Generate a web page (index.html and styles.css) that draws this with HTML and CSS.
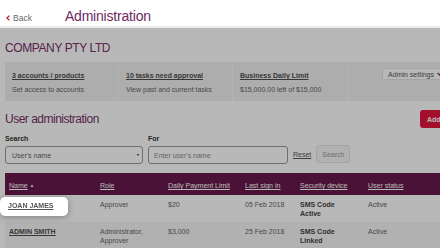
FILE: index.html
```html
<!DOCTYPE html>
<html lang="en">
<head>
    <meta charset="UTF-8">
    <meta name="viewport" content="width=device-width, initial-scale=1.0">
    <title>Administration</title>

    <link rel="stylesheet" href="styles.css">
</head>
<body>

    <header class="topbar">
        <a class="back" href="#"><svg class="back-icon" width="4" height="6" viewBox="0 0 4 6"><polyline points="3.4,0.6 0.9,3 3.4,5.4" fill="none" stroke="#d0103a" stroke-width="1.3"/></svg>Back</a>
        <h1 class="page-title">Administration</h1>
    </header>

    <!-- Dimmed layer behind the highlighted name -->
    <div class="dim"></div>

    <main class="content">
        <h2 class="company">COMPANY PTY LTD</h2>

        <div class="summary">
            <div class="summary-cell">
                <a class="summary-title" href="#">3 accounts / products</a>
                <p class="summary-note">Set access to accounts</p>
            </div>
            <div class="summary-cell">
                <a class="summary-title" href="#">10 tasks need approval</a>
                <p class="summary-note">View past and current tasks</p>
            </div>
            <div class="summary-cell">
                <a class="summary-title" href="#">Business Daily Limit</a>
                <p class="summary-note">$15,000.00 left of $15,000</p>
            </div>
            <div class="summary-cell settings">
                <button class="settings-btn">Admin settings <svg width="5" height="4" viewBox="0 0 5 4"><polyline points="0.6,0.8 2.5,3 4.4,0.8" fill="none" stroke="#6e2a62" stroke-width="1.2"/></svg></button>
            </div>
        </div>

        <div class="section-head">
            <h3 class="section-title">User administration</h3>
            <button class="add-btn">Add</button>
        </div>

        <form class="search">
            <div class="field">
                <label>Search</label>
                <div class="select-wrap">
                    <select class="select">
                        <option>User's name</option>
                    </select>
                </div>
            </div>
            <div class="field">
                <label>For</label>
                <input class="text-input" type="text" placeholder="Enter user's name">
            </div>
            <a class="reset" href="#">Reset</a>
            <button class="search-btn" type="button">Search</button>
        </form>

        <table class="users">
            <colgroup>
                <col style="width: 91px">
                <col style="width: 68px">
                <col style="width: 77px">
                <col style="width: 55px">
                <col style="width: 68px">
                <col style="width: 101px">
            </colgroup>
            <thead>
                <tr>
                    <th><a href="#">Name</a> <span class="sort">&#9650;</span></th>
                    <th><a href="#">Role</a></th>
                    <th><a href="#">Daily Payment Limit</a></th>
                    <th><a href="#">Last sign in</a></th>
                    <th><a href="#">Security device</a></th>
                    <th><a href="#">User status</a></th>
                </tr>
            </thead>
            <tbody>
                <tr>
                    <td><a class="name spot" href="#">JOAN JAMES</a></td>
                    <td>Approver</td>
                    <td>$20</td>
                    <td>05 Feb 2018</td>
                    <td class="device">SMS Code<br>Active</td>
                    <td>Active</td>
                </tr>
                <tr>
                    <td><a class="name" href="#">ADMIN SMITH</a></td>
                    <td>Administrator,<br>Approver</td>
                    <td>$3,000</td>
                    <td>25 Feb 2018</td>
                    <td class="device">SMS Code<br>Linked</td>
                    <td>Active</td>
                </tr>
            </tbody>
        </table>
    </main>

</body>
</html>
```

FILE: styles.css
```css
* {
    box-sizing: border-box;
}

body {
    margin: 0;
    font-family: "Liberation Sans", Arial, sans-serif;
    background: #fff;
    color: #4a4a4a;
    overflow: hidden;
}

/* Top bar */
.topbar {
    display: flex;
    align-items: baseline;
    height: 28px;
    padding: 8px 6px 0;
    border-bottom: 2px solid #ececec;
}

.back {
    font-size: 8.5px;
    line-height: 16px;
    color: #666;
    text-decoration: none;
}

.back-icon {
    margin-right: 3px;
    vertical-align: 0;
}

.page-title {
    margin: 0 0 0 33px;
    font-size: 14px;
    line-height: 16px;
    font-weight: normal;
    color: #6e2a62;
    letter-spacing: -0.2px;
}

/* Overlay */
.dim {
    position: fixed;
    top: 28px;
    left: 0;
    right: 0;
    bottom: 0;
    background: rgba(0, 0, 0, 0.28);
    z-index: 1;
}

.content {
    width: 460px;
    padding: 0 5px;
}

.company {
    margin: 13px 0 7px;
    font-size: 12px;
    line-height: 14px;
    font-weight: normal;
    color: #7a3068;
    letter-spacing: -0.4px;
}

/* Summary strip */
.summary {
    display: grid;
    grid-template-columns: 113px 114px 115px 1fr;
    height: 39px;
    background: #f0f0f0;
}

.summary-cell {
    padding: 9px 7px 0;
}

.summary-cell + .summary-cell {
    border-left: 1px solid #f9f9f9;
}

.summary-title {
    display: block;
    font-size: 7px;
    line-height: 9px;
    font-weight: bold;
    color: #4e4e4e;
    text-decoration: underline;
}

.summary-note {
    margin: 5px 0 0;
    font-size: 7px;
    line-height: 9px;
    color: #666;
}

.settings {
    display: flex;
    justify-content: flex-end;
    align-items: flex-start;
    padding: 6px 8px 0 0;
}

.settings-btn {
    display: flex;
    align-items: center;
    gap: 3px;
    height: 12px;
    padding: 0 4px 0 5px;
    border: 1px solid #e4e4e4;
    border-radius: 2px;
    background: #fff;
    font-family: inherit;
    font-size: 7px;
    color: #555;
}

/* Section heading */
.section-head {
    display: flex;
    justify-content: space-between;
    align-items: center;
    margin-top: 9px;
}

.section-title {
    margin: 0;
    font-size: 12px;
    line-height: 14px;
    font-weight: normal;
    color: #7a3068;
    letter-spacing: -0.5px;
}

.add-btn {
    width: 35px;
    height: 18px;
    padding: 0 0 0 7px;
    border: none;
    border-radius: 3px;
    background: #e2163c;
    color: #fff;
    font-family: inherit;
    font-size: 7px;
    font-weight: bold;
    text-align: left;
}

/* Search form */
.search {
    display: flex;
    align-items: flex-end;
    gap: 5px;
    margin-top: 6px;
}

.field label {
    display: block;
    margin-bottom: 3px;
    font-size: 7px;
    line-height: 9px;
    font-weight: bold;
    color: #333;
}

.select-wrap {
    position: relative;
    width: 138px;
}

.select-wrap::after {
    content: "";
    position: absolute;
    right: 4px;
    top: 8px;
    border-left: 1.5px solid transparent;
    border-right: 1.5px solid transparent;
    border-top: 2.5px solid #222;
}

.select {
    appearance: none;
    display: block;
    width: 100%;
    height: 18px;
    padding: 0 0 0 6px;
    border: 1px solid #999;
    border-radius: 3px;
    background: #fff;
    font-family: inherit;
    font-size: 7px;
    color: #666;
}

.text-input {
    display: block;
    width: 140px;
    height: 18px;
    padding: 0 0 0 5px;
    border: 1px solid #999;
    border-radius: 3px;
    background: #fff;
    font-family: inherit;
    font-size: 7px;
    outline: none;
}

.text-input::placeholder {
    color: #8a8a8a;
}

.reset {
    font-size: 7px;
    line-height: 18px;
    color: #555;
    text-decoration: underline;
}

.search-btn {
    height: 18px;
    margin-bottom: 1px;
    padding: 0 5px;
    border: 1px solid #e2e2e2;
    border-radius: 3px;
    background: #f6f6f6;
    font-family: inherit;
    font-size: 7px;
    color: #999;
}

/* Users table */
.users {
    width: 460px;
    margin-top: 9px;
    border-collapse: collapse;
    table-layout: fixed;
    font-size: 7px;
    line-height: 9px;
}

.users th {
    padding: 8px 4px 5px;
    background: #671a4b;
    font-weight: normal;
    text-align: left;
    color: #fff;
    white-space: nowrap;
}

.users th a {
    color: #fff;
    text-decoration: underline;
}

.sort {
    font-size: 4.5px;
    vertical-align: 1px;
}

.users td {
    padding: 5px 4px 4px;
    vertical-align: top;
    color: #666;
    white-space: nowrap;
}

.users tbody tr:nth-child(2) td {
    background: #f5f5f5;
}

.device {
    font-weight: bold;
    color: #444 !important;
}

.name {
    font-weight: bold;
    color: #4a4a4a;
    text-decoration: underline;
}

/* Highlighted name above the overlay */
.spot {
    position: relative;
    top: 1px;
    z-index: 2;
    display: inline-block;
    margin: -4px 0 -6px -9px;
    padding: 4px 14px 6px 8px;
    border-radius: 5px;
    background: #fff;
    color: #555;
    box-shadow: 0 1px 6px rgba(0, 0, 0, 0.3);
}
```
